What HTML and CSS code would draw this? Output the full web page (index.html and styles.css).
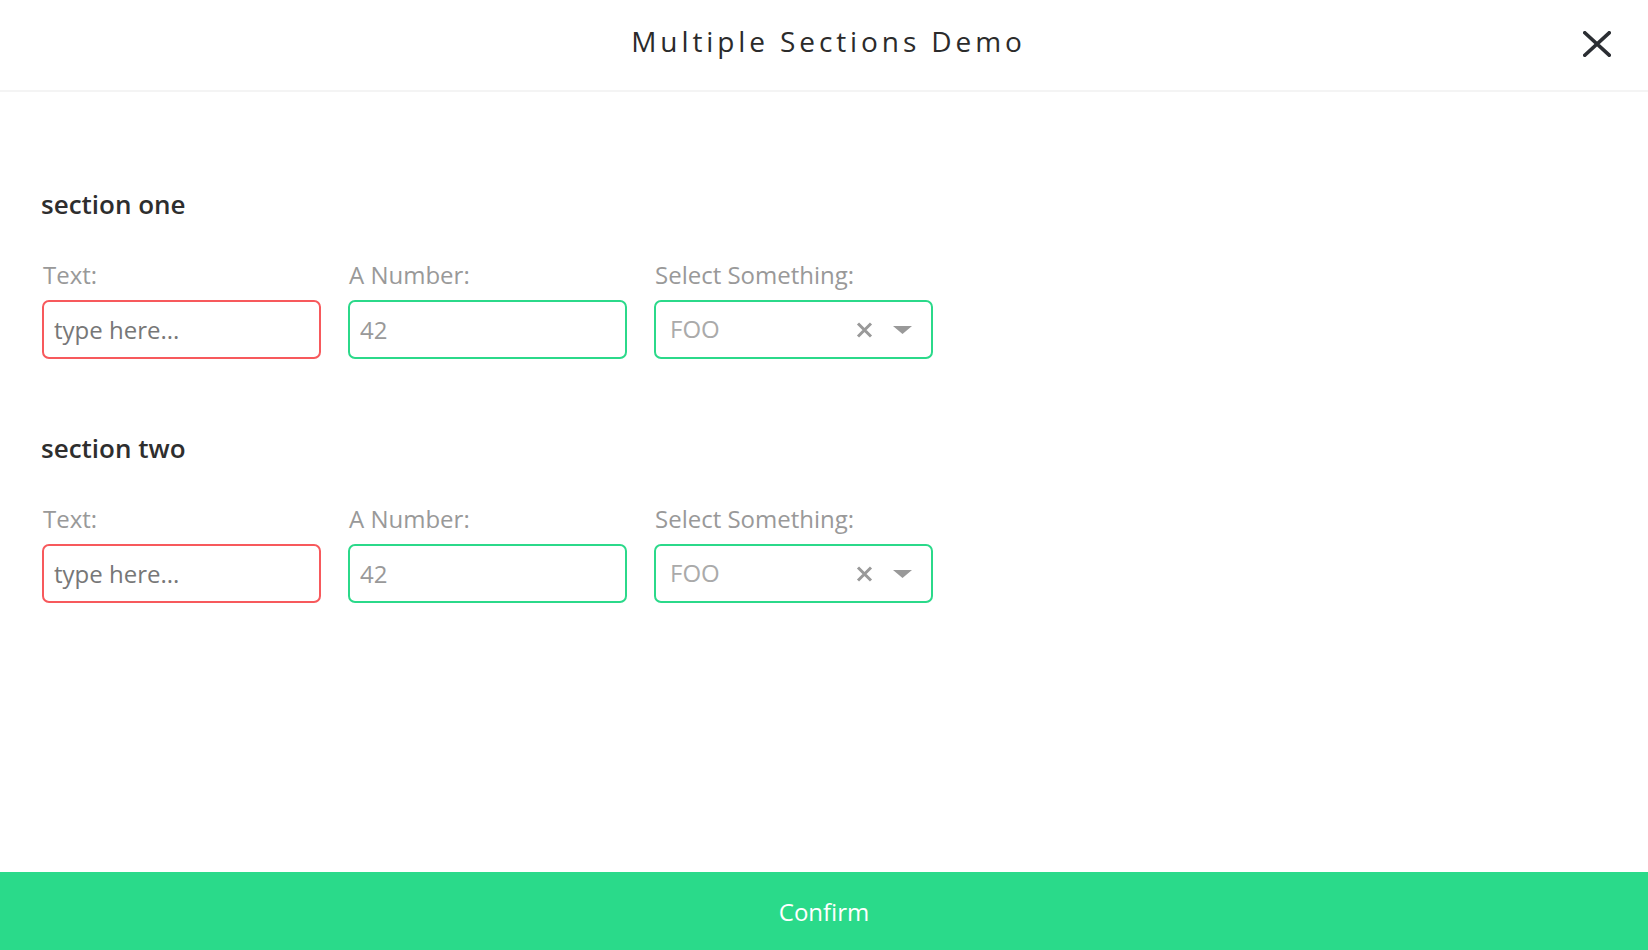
FILE: index.html
```html
<!DOCTYPE html>
<html lang="en">
<head>
<meta charset="utf-8">
<title>Multiple Sections Demo</title>
<link rel="stylesheet" href="styles.css">
</head>
<body>
<div class="page">
  <header class="header">
    <div class="spacer"></div>
    <h1 class="title">Multiple Sections Demo</h1>
    <button class="close" aria-label="Close">
      <svg width="28" height="26" viewBox="0 0 28 26"><path d="M1.8 1.8 L26.2 24.2 M26.2 1.8 L1.8 24.2" stroke="#2b2e33" stroke-width="3.6" stroke-linecap="square" fill="none"/></svg>
    </button>
  </header>
  <main class="content">
    <section class="section">
      <h2 class="section-title">section one</h2>
      <div class="fields">
        <div class="field">
          <label class="label">Text:</label>
          <input class="input invalid" type="text" placeholder="type here...">
        </div>
        <div class="field">
          <label class="label">A Number:</label>
          <input class="input valid" type="text" value="42">
        </div>
        <div class="field">
          <label class="label">Select Something:</label>
          <div class="select valid">
            <span class="select-value">FOO</span>
            <svg class="clear" width="17" height="16" viewBox="0 0 17 16"><path d="M2 1.5 L15 14.5 M15 1.5 L2 14.5" stroke="#999" stroke-width="3" fill="none"/></svg>
            <svg class="arrow" width="19" height="8" viewBox="0 0 19 8"><path d="M0 0 H19 L9.5 8 Z" fill="#999"/></svg>
          </div>
        </div>
      </div>
    </section>
    <section class="section">
      <h2 class="section-title">section two</h2>
      <div class="fields">
        <div class="field">
          <label class="label">Text:</label>
          <input class="input invalid" type="text" placeholder="type here...">
        </div>
        <div class="field">
          <label class="label">A Number:</label>
          <input class="input valid" type="text" value="42">
        </div>
        <div class="field">
          <label class="label">Select Something:</label>
          <div class="select valid">
            <span class="select-value">FOO</span>
            <svg class="clear" width="17" height="16" viewBox="0 0 17 16"><path d="M2 1.5 L15 14.5 M15 1.5 L2 14.5" stroke="#999" stroke-width="3" fill="none"/></svg>
            <svg class="arrow" width="19" height="8" viewBox="0 0 19 8"><path d="M0 0 H19 L9.5 8 Z" fill="#999"/></svg>
          </div>
        </div>
      </div>
    </section>
  </main>
  <button class="confirm">Confirm</button>
</div>
</body>
</html>
```

FILE: styles.css
```css
* { box-sizing: border-box; }
html, body { margin: 0; padding: 0; height: 100%; }
body {
  font-family: "Open Sans", "Liberation Sans", sans-serif;
  background: #fff;
  color: #333;
}
.page {
  height: 100vh;
  display: flex;
  flex-direction: column;
}
.header {
  height: 92px;
  border-bottom: 2px solid #f4f4f4;
  display: grid;
  grid-template-columns: 1fr auto 1fr;
  align-items: start;
  padding-top: 21px;
}
.title {
  margin: 0;
  font-size: 28px;
  line-height: 40px;
  font-weight: 400;
  letter-spacing: 3.9px;
  color: #2b2b2b;
  padding-left: 9px;
}
.close {
  justify-self: end;
  margin: 10px 37px 0 0;
  padding: 0;
  border: 0;
  background: none;
  width: 28px;
  height: 26px;
  display: block;
}
.close svg { display: block; }
.content {
  flex: 1;
  padding: 94px 42px 0 42px;
  display: flex;
  flex-direction: column;
  gap: 71px;
}
.section-title {
  margin: 0 0 0 -1px;
  font-size: 26px;
  line-height: 36px;
  font-weight: 600;
  color: #2e2e2e;
}
.fields {
  margin-top: 37px;
  display: flex;
  gap: 27px;
}
.field {
  width: 279px;
  display: flex;
  flex-direction: column;
}
.label {
  font-size: 24px;
  line-height: 32px;
  color: #999;
  margin-bottom: 9px;
  padding-left: 1px;
}
.input, .select {
  width: 279px;
  height: 59px;
  border: 2px solid;
  border-radius: 7px;
  font-family: inherit;
  font-size: 24px;
  background: #fff;
}
.input {
  padding: 0 10px;
  color: #999;
  outline: none;
}
.input::placeholder { color: #777; opacity: 1; }
.invalid { border-color: #f7595c; }
.valid { border-color: #2bd98a; }
.select {
  display: flex;
  align-items: center;
  padding: 0 19px 0 14px;
}
.select-value {
  flex: 1;
  color: #aaa;
  padding-bottom: 3px;
}
.clear { display: block; margin-right: 20px; }
.arrow { display: block; }
.confirm {
  height: 78px;
  width: 100%;
  border: 0;
  margin: 0;
  background: #2ada8a;
  color: #fff;
  font-family: inherit;
  font-size: 24px;
  padding: 0;
}
```
